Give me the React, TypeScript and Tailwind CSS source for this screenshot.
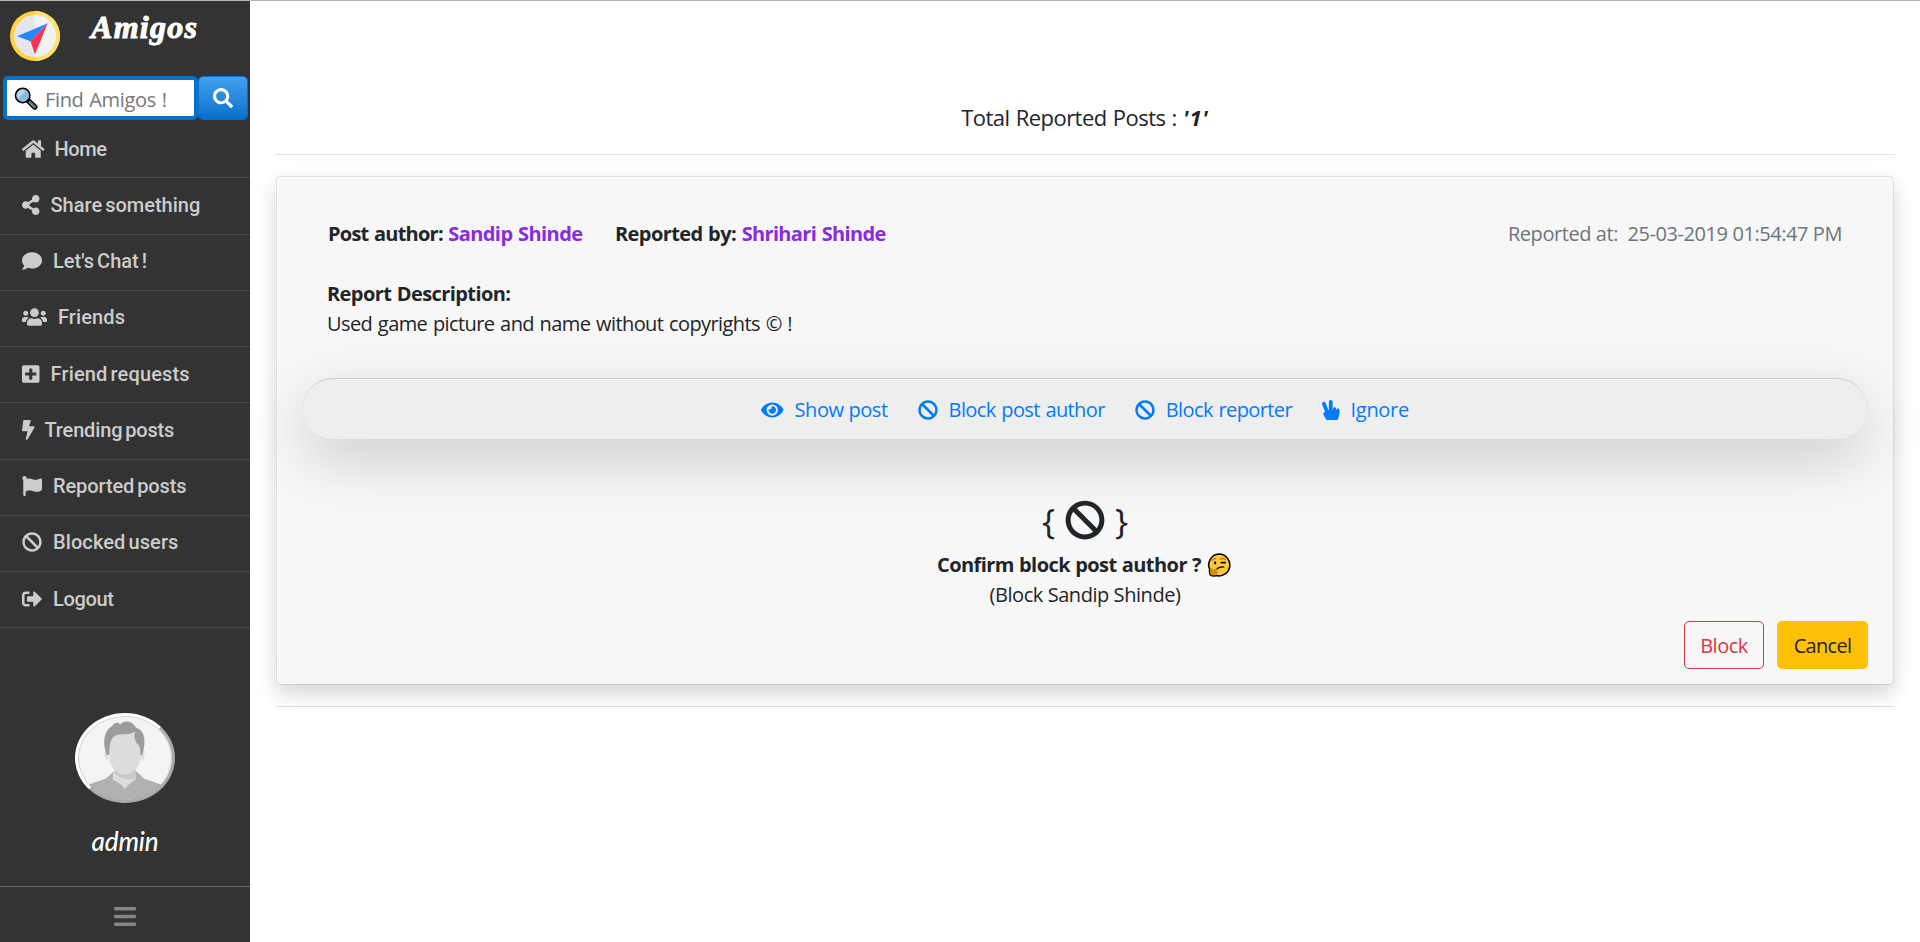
import type { ReactNode } from 'react';
import type { IconType } from 'react-icons';
import {
  FaBan,
  FaBars,
  FaBolt,
  FaComment,
  FaEye,
  FaFlag,
  FaHandPeace,
  FaHome,
  FaPlusSquare,
  FaSearch,
  FaShareAlt,
  FaSignOutAlt,
  FaUsers,
} from 'react-icons/fa';

type NavItem = { label: string; icon: IconType; iconClass: string; textClass: string };

const navItems: NavItem[] = [
  { label: 'Home', icon: FaHome, iconClass: 'w-[22.5px]', textClass: '-ml-px tracking-[-0.4px]' },
  { label: 'Share something', icon: FaShareAlt, iconClass: 'w-[17.5px]', textClass: 'tracking-[0.01px]' },
  { label: "Let's Chat !", icon: FaComment, iconClass: 'w-5', textClass: 'tracking-[0.02px]' },
  { label: 'Friends', icon: FaUsers, iconClass: 'w-[25px]', textClass: 'tracking-[0.1px]' },
  { label: 'Friend requests', icon: FaPlusSquare, iconClass: 'w-[17.5px]', textClass: 'tracking-[0.15px]' },
  { label: 'Trending posts', icon: FaBolt, iconClass: 'w-[12.5px]', textClass: '-ml-px tracking-[-0.15px]' },
  { label: 'Reported posts', icon: FaFlag, iconClass: 'w-5', textClass: 'tracking-[-0.1px]' },
  { label: 'Blocked users', icon: FaBan, iconClass: 'w-5', textClass: 'tracking-[0.1px]' },
  { label: 'Logout', icon: FaSignOutAlt, iconClass: 'w-5', textClass: 'tracking-[-0.35px]' },
];

function CompassLogo() {
  return (
    <svg viewBox="0 0 50 50" className="size-[50px]">
      <circle cx="25" cy="25" r="25" fill="#ffd43b" />
      <path d="M25 0a25 25 0 0 1 0 50z" fill="#ffe071" />
      <circle cx="25" cy="25" r="21" fill="#e4e6e9" />
      <path d="M25 4a21 21 0 0 1 0 42z" fill="#f1f2f2" />
      <path d="M37.7 12.2 7 25.2l13.5 5z" fill="#2488ff" />
      <path d="M37.7 12.2 20.5 30.2 25 43.3z" fill="#ff3051" />
    </svg>
  );
}

function MagnifierEmoji() {
  return (
    <svg viewBox="0 0 24 24" className="mt-0.5 size-6">
      <path d="M14.2 13.6 20.8 20" stroke="#000" strokeWidth="5.4" strokeLinecap="round" />
      <path d="M16 15.3 20.6 19.8" stroke="#5d6b75" strokeWidth="3.2" strokeLinecap="round" />
      <path d="M15.6 15.6 19.4 19.4" stroke="#8b979f" strokeWidth="1" strokeLinecap="round" />
      <circle cx="8.7" cy="8.4" r="7" fill="#84bdea" stroke="#000" strokeWidth="2" />
      <circle cx="8.7" cy="8.4" r="6" fill="#84bdea" stroke="#a9b5bd" strokeWidth="0.8" />
      <path d="M4 11.4A5.6 5.6 0 0 1 11.8 3.9z" fill="#b7daf4" />
    </svg>
  );
}

function ThinkingEmoji() {
  return (
    <svg viewBox="0 0 24 24" className="size-6">
      <path d="M12 1.1a10.9 10.9 0 1 1-2.6 21.5c-1.6.6-5 .6-6-.6-1-1.3-.9-4-.7-5.5A10.9 10.9 0 0 1 12 1.1z" fill="#ffc83d" stroke="#000" strokeWidth="1.5" />
      <path d="M3.4 15.2c.3-.8 1.4-.8 1.7 0l.5 1.8 4.2-1.8c1.1-.4 1.8.8.9 1.4l-1.5 1c1.8-.2 2 .9 1.6 2-.5 1.5-1.6 2.3-3.2 2.5-1.8.3-3.5.1-4-.6-.7-1-.7-4.6-.2-6.3z" fill="#d68d00" />
      <path d="M5.4 7.3c.7-1.2 1.9-1.7 3.3-1.4M13.4 6.3c1.6-1.2 3.6-1 4.9.2" fill="none" stroke="#d67d00" strokeWidth="1.5" strokeLinecap="round" />
      <ellipse cx="8.2" cy="9.8" rx="1.1" ry="1.6" fill="#000" />
      <path d="M14.4 9.6h3.6" stroke="#000" strokeWidth="1.9" strokeLinecap="round" />
      <path d="M10.4 15.6c1.4-1.3 3.7-1.8 6.3-1.7" fill="none" stroke="#000" strokeWidth="1.4" strokeLinecap="round" />
    </svg>
  );
}

function Avatar() {
  return (
    <div className="h-[90px] w-[100px] overflow-hidden rounded-[50%] border-[3px] border-t-white border-r-[#a9a9a9] border-b-[#a9a9a9] border-l-white bg-[#f4f4f4]">
      <svg viewBox="3 3 94 84" className="h-full w-full" preserveAspectRatio="none">
        <path d="M10 73.5C18 69.5 27 67 31 65.5l7-6.5h24l7 6.5c4 1.5 14 4.5 20 7.5v20H10z" fill="#b1b1b1" />
        <path d="M38 58c0 5 0 6-.5 8 5 4 10 5 12.5 11 1.5-5 6-7 11-11V56z" fill="#dcdcdc" />
        <path d="M38 58c5 8 17 9.5 23 7.5v-8z" fill="#c9c9c9" />
        <path d="M32 37c-4-1-3.5 10 1.5 10.5M67 37c4-1 3.5 10-1.5 10.5" fill="#dcdcdc" />
        <path d="M33.5 24c0-8 33-8 32.5 0 0 10 .5 20-2 27-3 7-9 11-14 11s-11-4-14-11c-3-7-2.5-17-2.5-27z" fill="#dcdcdc" />
        <path d="M32.2 42C27.5 33 28 18 37 13.3c2-3 4.5-3.8 7-3.3l1 1.7c3-4.5 12-5 15.8 2.8C71 18 71 30 67.2 42l-1.7.3c0-5 0-8-2.5-11-3-3-4-6-3.2-12.8C55 22.5 46 20 39.5 23c-6 5-4.5 12-5.5 19z" fill="#9c9c9c" />
        <ellipse cx="50" cy="45" rx="46.6" ry="41.6" fill="none" stroke="#8a8a8a" strokeOpacity="0.5" strokeWidth="0.7" />
      </svg>
    </div>
  );
}

function Sidebar() {
  return (
    <aside className="flex w-[250px] shrink-0 flex-col bg-[#333]">
      <div className="flex h-[75px] pt-[10px] pl-[10px]">
        <CompassLogo />
        <h1 className="ml-[31px] font-['Liberation_Serif',serif] text-[32px] leading-[32px] font-bold tracking-[1.3px] text-white italic [-webkit-text-stroke:1px_white]">Amigos</h1>
      </div>

      <div className="flex h-11 pl-[3px]">
        <div className="flex w-[195px] items-center rounded-[5px] border-4 border-[#0071cd] bg-white pl-[7px]">
          <MagnifierEmoji />
          <span className="mt-[3px] ml-[7px] text-[20px] tracking-[-0.35px] text-[#777] [word-spacing:1px]">Find Amigos !</span>
        </div>
        <button className="flex w-[50px] items-center justify-center rounded-[5px] border border-[#0071cd] bg-linear-to-b from-[#42a0ee] to-[#0070cb] text-white">
          <FaSearch className="size-5" />
        </button>
      </div>

      <nav className="mt-[2px] flex flex-col font-['Roboto',sans-serif] text-[20px] font-medium text-[#ccc]">
        {navItems.map(({ label, icon: Icon, iconClass, textClass }) => (
          <a key={label} className="flex h-[56.25px] items-center gap-[11px] border-b border-[#4a4a4a] pb-[2px] pl-[22px]">
            <Icon className={`h-5 shrink-0 ${iconClass}`} />
            <span className={`whitespace-nowrap [word-spacing:-2px] ${textClass}`}>{label}</span>
          </a>
        ))}
      </nav>

      <div className="mt-[85px] flex flex-col items-center">
        <Avatar />
        <span className="mt-[22px] font-['Lato',sans-serif] text-[26px] leading-8 font-medium tracking-[-0.1px] text-white italic">admin</span>
      </div>

      <div className="mt-auto flex h-[56px] justify-center border-t border-[#6a6a6a] pt-[17px]">
        <FaBars className="h-[25px] w-[22px] text-[#858585]" />
      </div>
    </aside>
  );
}

function Action({ icon: Icon, iconClass, textClass, children }: { icon: IconType; iconClass: string; textClass: string; children: ReactNode }) {
  return (
    <a className="flex items-center gap-[11px] text-[#007bff]">
      <Icon className={`h-5 ${iconClass}`} />
      <span className={`whitespace-nowrap ${textClass}`}>{children}</span>
    </a>
  );
}

function ReportCard() {
  return (
    <article className="mr-px ml-px flex h-[509px] flex-col rounded-[5px] border border-[#dcdcdc] border-b-[#cfcfcf] bg-[#f7f7f7] shadow-[inset_1px_1px_0_#fff,0_10px_20px_rgba(0,0,0,0.15),0_0_30px_rgba(0,0,0,0.02)]">
      <div className="px-[50px] pt-[42px]">
        <div className="flex">
          <p className="w-[288px] pl-px font-bold tracking-[-0.76px] [word-spacing:1px]">
            Post author: <span className="tracking-[-0.58px] text-[#8a2be2]">Sandip Shinde</span>
          </p>
          <p className="font-bold tracking-[-0.6px] [word-spacing:1px]">
            Reported by: <span className="tracking-[-0.65px] text-[#8a2be2]">Shrihari Shinde</span>
          </p>
          <p className="mr-px ml-auto whitespace-pre text-[#6c757d] tracking-[-0.43px]">{'Reported at:  25-03-2019 01:54:47 PM'}</p>
        </div>
        <p className="mt-[30px] font-bold tracking-[-0.6px] [word-spacing:1px]">Report Description:</p>
        <p className="tracking-[-0.58px] [word-spacing:1px]">Used game picture and name without copyrights © !</p>
      </div>

      <div className="mx-[26px] mt-[39px] flex h-[61px] shrink-0 items-center justify-center gap-[30px] rounded-[30px] border-t border-[#ccc] bg-[#eee] pt-px shadow-[0_20px_60px_rgba(0,0,0,0.175)]">
        <Action icon={FaEye} iconClass="w-[22.5px]" textClass="tracking-[-0.43px]">Show post</Action>
        <Action icon={FaBan} iconClass="w-5" textClass="tracking-[-0.6px] [word-spacing:1px]">Block post author</Action>
        <Action icon={FaBan} iconClass="w-5" textClass="tracking-[-0.6px] [word-spacing:1px]">Block reporter</Action>
        <Action icon={FaHandPeace} iconClass="w-[17.5px]" textClass="tracking-[-0.3px]">Ignore</Action>
      </div>

      <div className="mt-[60px] flex flex-col items-center">
        <div className="flex h-[51px] items-start gap-[10px]">
          <span className="text-[35px] leading-[44px]">{'{'}</span>
          <FaBan className="mt-px size-10" />
          <span className="text-[35px] leading-[44px]">{'}'}</span>
        </div>
        <p className="mr-[2px] flex items-center gap-[6px] font-bold tracking-[-0.56px] [word-spacing:0.5px]">
          Confirm block post author ? <ThinkingEmoji />
        </p>
        <p className="tracking-[-0.44px]">(Block Sandip Shinde)</p>
      </div>

      <div className="mt-[11px] flex justify-end gap-[13px] pr-[25px]">
        <button className="h-12 w-20 rounded-[5px] border border-[#dc3545] pt-px text-[#dc3545] tracking-[-0.5px]">Block</button>
        <button className="h-12 w-[91px] rounded-[5px] bg-[#ffc107] pt-0.5 tracking-[-0.7px]">Cancel</button>
      </div>
    </article>
  );
}

export default function App() {
  return (
    <div className="flex h-[942px] w-full overflow-hidden border-t border-[#b4b4b4] bg-white font-['Open_Sans','Noto_Sans',sans-serif] text-[20px] leading-[30px] text-[#212529]">
      <Sidebar />
      <main className="flex-1 px-[25px]">
        <h2 className="mt-[100px] text-center text-[22px] leading-8 tracking-[-0.54px] [word-spacing:1px]">
          Total Reported Posts : <b className="tracking-[0.8px] italic">'1'</b>
        </h2>
        <hr className="mt-[21px] mb-[21px] border-[#e3e3e3]" />
        <ReportCard />
        <hr className="mx-px mt-[21px] border-[#dcdcdc]" />
      </main>
    </div>
  );
}
